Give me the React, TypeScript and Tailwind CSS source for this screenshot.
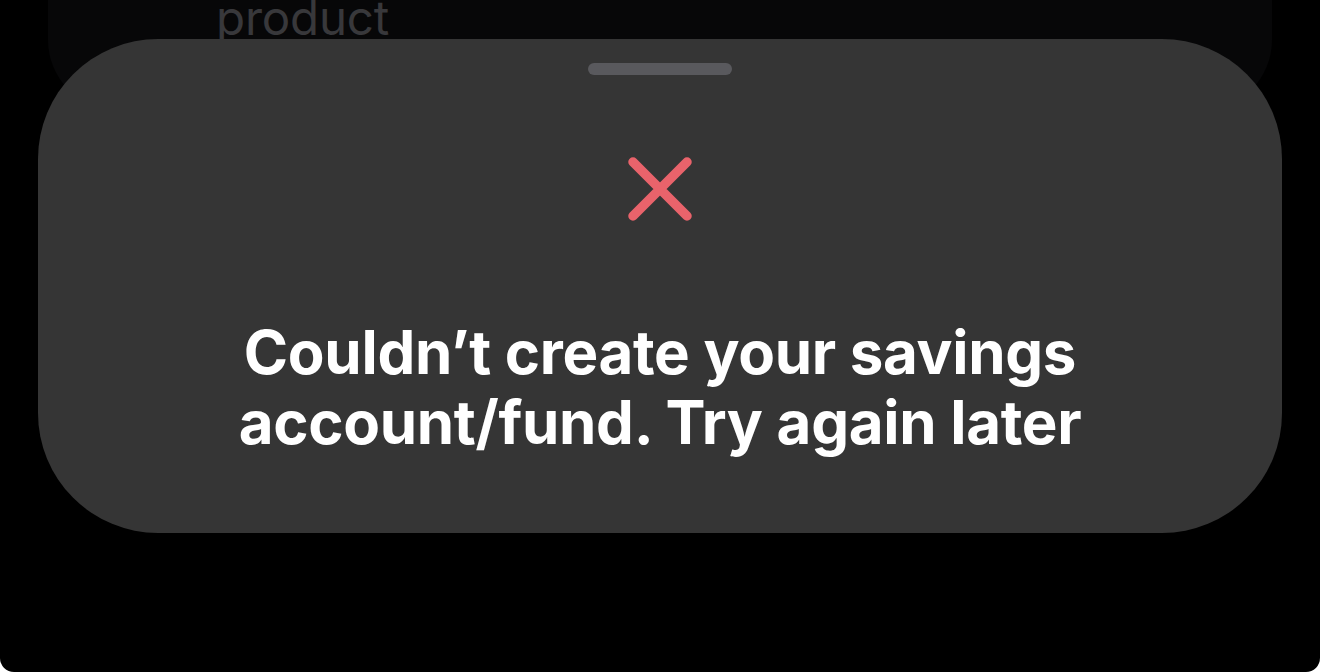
export default function App() {
  return (
    <div className="w-[1320px] h-[672px] bg-white" style={{ fontFamily: 'Inter, "Noto Sans", sans-serif' }}>
      <div className="w-full h-full bg-black rounded-b-[14px] overflow-hidden flex flex-col">
        <div className="mx-[48px] -mt-[80px] h-[190px] shrink-0 rounded-[70px] bg-[#070708] flex items-end pl-[168px] pb-[69px]">
          <span className="text-[47.5px] leading-none text-[#38383b] font-normal tracking-[-0.2px]">product</span>
        </div>
        <div className="mx-[38px] -mt-[71px] h-[494px] shrink-0 rounded-[120px] bg-[#353535] flex flex-col items-center">
          <div className="mt-[24px] w-[144px] h-[12px] rounded-full bg-[#59595d]" />
          <svg className="mt-[82px]" width="64" height="64" viewBox="0 0 64 64" fill="none">
            <path d="M5 5 L59 59 M59 5 L5 59" stroke="#e9636b" strokeWidth="9.5" strokeLinecap="round" />
          </svg>
          <div className="mt-[96px] text-center text-white font-bold text-[60px] leading-[70px] tracking-[-0.3px]">
            Couldn’t create your savings
            <br />
            account/fund. Try again later
          </div>
        </div>
      </div>
    </div>
  );
}
